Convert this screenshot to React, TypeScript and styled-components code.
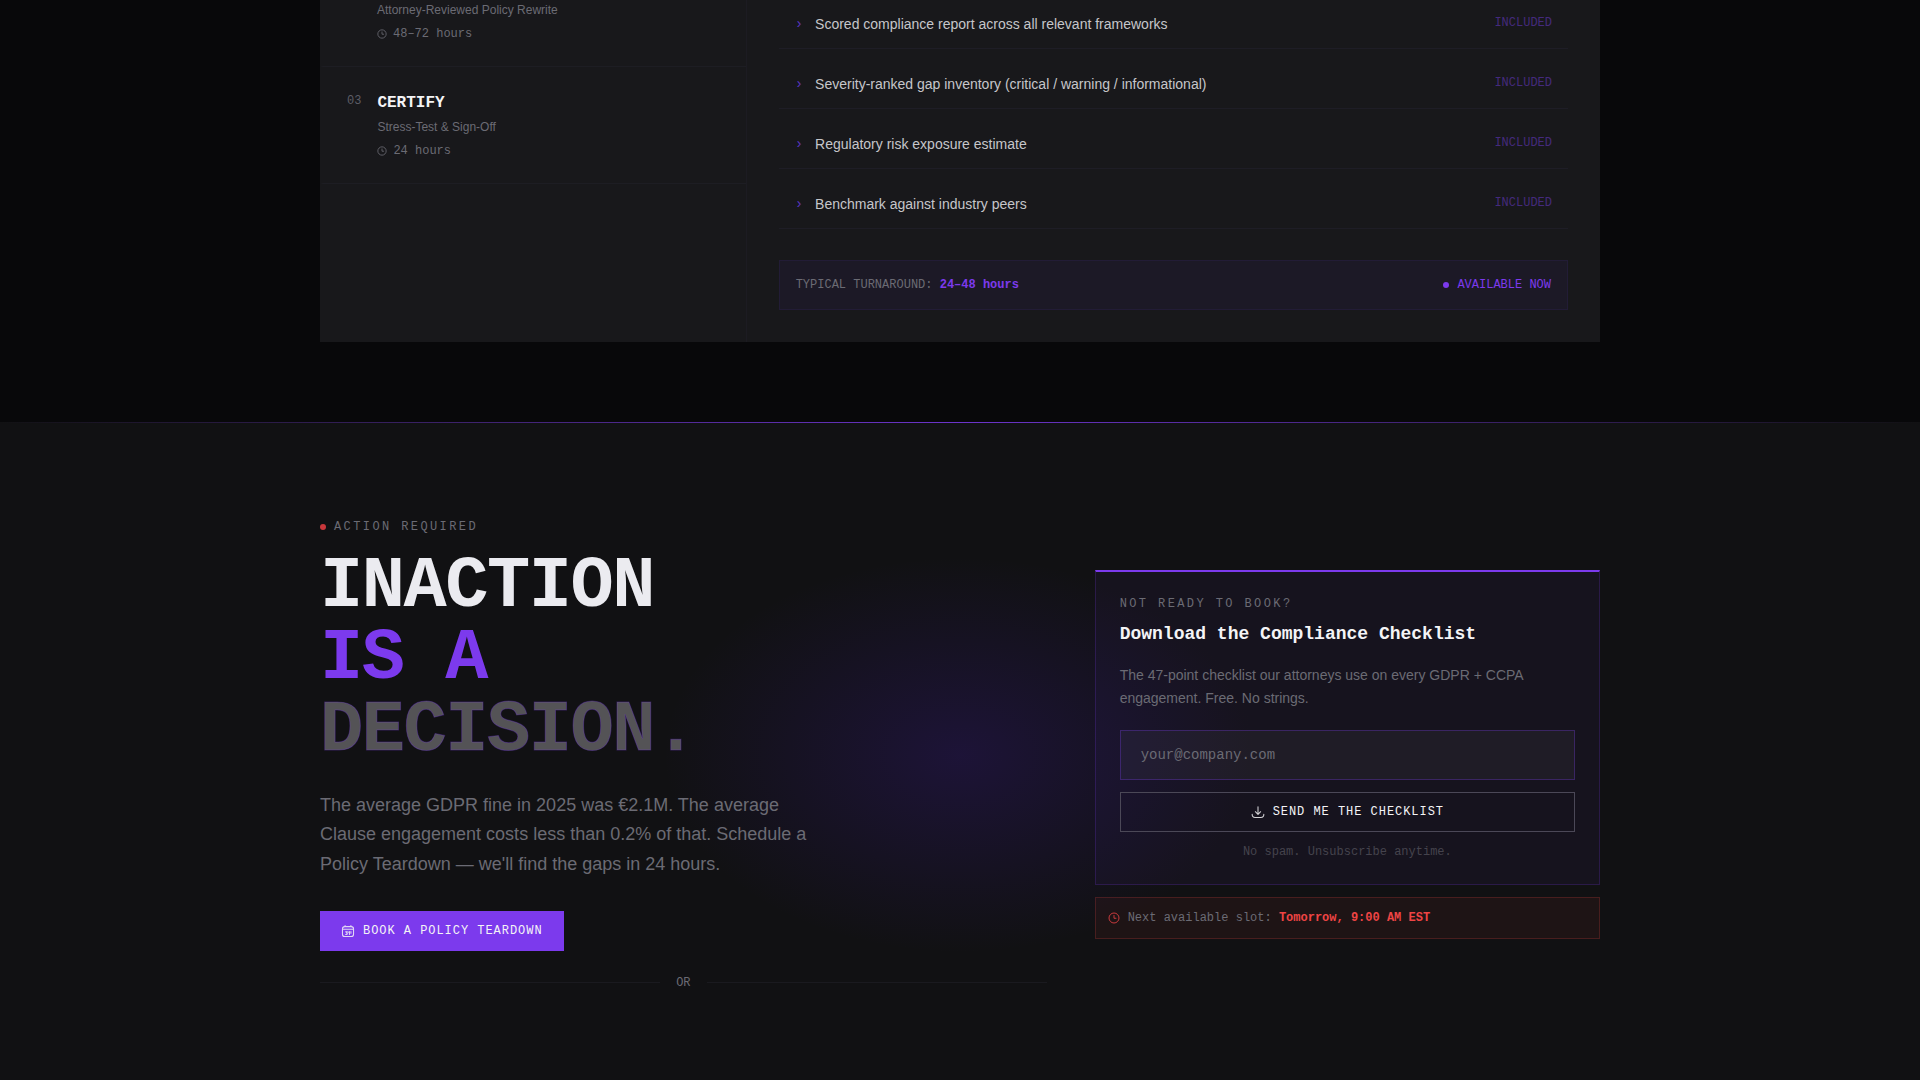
import React from "react";
import styled, { createGlobalStyle } from "styled-components";

const mono = `"Liberation Mono", "Courier New", monospace`;
const sans = `"Liberation Sans", Arial, sans-serif`;
const violet = "#7c3aed";
const muted = "#6b6b74";

const GlobalStyle = createGlobalStyle`
  *, *::before, *::after { box-sizing: border-box; }
  body { margin: 0; background: #08080a; color: #f4f4f6; font-family: ${sans}; }
  h2, h3, p, ul, ol { margin: 0; padding: 0; }
  ul, ol { list-style: none; }
`;

const Page = styled.main`
  min-height: 100vh;
  display: flex;
  flex-direction: column;
`;

const Container = styled.div`
  width: 100%;
  max-width: 1280px;
  margin: 0 auto;
`;

const Process = styled.section`
  padding-bottom: 80px;
`;

const Panel = styled(Container)`
  display: grid;
  grid-template-columns: 1fr 2fr;
  background: #18181b;
`;

const Steps = styled.ol`
  border-right: 1px solid #1c1b22;
`;

const Step = styled.li<{ $cut?: boolean }>`
  display: flex;
  gap: 16px;
  padding: ${(p) => (p.$cut ? "2px 24px 24px 54px" : "24px")};
  border-left: 3px solid transparent;
  border-bottom: 1px solid #1d1d23;
`;

const StepNumber = styled.span`
  padding-top: 2px;
  font: 12px/16px ${mono};
  color: #5d5d66;
`;

const StepTitle = styled.h3`
  margin-bottom: 4px;
  font: bold 16px/24px ${mono};
`;

const StepSubtitle = styled.p`
  margin-bottom: 8px;
  font: 12px/16px ${sans};
  color: ${muted};
`;

const Duration = styled.p`
  display: flex;
  align-items: center;
  gap: 6px;
  font: 12px/16px ${mono};
  color: ${muted};
`;

const Detail = styled.div`
  padding: 1px 32px 32px;
`;

const Deliverables = styled.ul`
  display: grid;
  gap: 12px;
  margin-bottom: 31px;
`;

const Deliverable = styled.li`
  display: flex;
  align-items: flex-start;
  gap: 12px;
  padding: 12px 16px;
  border-bottom: 1px solid #1e1d26;
  font: 14px/23px ${sans};
  color: #c6c6ca;
`;

const Chevron = styled.span`
  font-family: ${mono};
  color: #5b35c0;
`;

const Included = styled.span`
  margin-left: auto;
  font: 12px/20px ${mono};
  color: #442a7c;
`;

const Turnaround = styled.div`
  display: flex;
  justify-content: space-between;
  align-items: center;
  padding: 16px;
  border: 1px solid #221c36;
  background: #1c1926;
  font: 12px/16px ${mono};
  color: ${muted};

  strong { color: ${violet}; }
`;

const Status = styled.span`
  display: flex;
  align-items: center;
  gap: 8px;
  color: ${violet};
`;

const Dot = styled.i<{ $color: string }>`
  width: 6px;
  height: 6px;
  border-radius: 50%;
  background: ${(p) => p.$color};
`;

const Cta = styled.section`
  position: relative;
  flex: 1;
  padding: 97px 0 80px;
  background: #111113;
`;

const TopRule = styled.div`
  position: absolute;
  inset: 0 0 auto;
  height: 1px;
  background: linear-gradient(90deg, transparent, ${violet}, transparent);
  opacity: 0.85;
`;

const CtaGrid = styled(Container)`
  position: relative;
  display: grid;
  grid-template-columns: repeat(12, 1fr);
  column-gap: 48px;
  align-items: center;
`;

const Glow = styled.div`
  position: absolute;
  top: 50%;
  left: 50%;
  width: 600px;
  height: 400px;
  transform: translate(-50%, -50%);
  background: radial-gradient(ellipse, rgba(76, 29, 200, 0.2), transparent 70%);
  pointer-events: none;
`;

const Pitch = styled.div`
  position: relative;
  grid-column: span 7;
`;

const Offer = styled.aside`
  position: relative;
  grid-column: span 5;
  display: grid;
  gap: 12px;
`;

const Eyebrow = styled.p`
  display: flex;
  align-items: center;
  gap: 8px;
  font: 12px/16px ${mono};
  letter-spacing: 0.2em;
  color: ${muted};
`;

const Headline = styled.h2`
  margin: 16px 0 24px;
  font: bold 72px/72px ${mono};
  letter-spacing: -0.02em;
  color: #ebebf0;
`;

const HeadlineLine = styled.span<{ $tone?: "violet" | "ghost" }>`
  display: block;
  ${(p) => p.$tone === "violet" && `color: ${violet};`}
  ${(p) =>
    p.$tone === "ghost" &&
    `color: #545356; -webkit-text-stroke: 1px rgba(124, 58, 237, 0.3);`}
`;

const Lead = styled.p`
  max-width: 512px;
  margin-bottom: 32px;
  font-size: 18px;
  line-height: 1.625;
  color: ${muted};
`;

const Button = styled.button<{ $primary?: boolean }>`
  display: flex;
  align-items: center;
  justify-content: center;
  gap: 8px;
  height: 40px;
  padding: 0 20px;
  border: 1px solid ${(p) => (p.$primary ? violet : "#4b4857")};
  background: ${(p) => (p.$primary ? violet : "transparent")};
  color: #f4f4f6;
  font: 12px/16px ${mono};
  letter-spacing: 0.08em;
  cursor: pointer;

  svg { opacity: 0.85; }
`;

const Divider = styled.div`
  display: flex;
  align-items: center;
  gap: 16px;
  margin-top: 24px;
  font: 12px/16px ${mono};
  color: ${muted};

  &::before, &::after {
    content: "";
    flex: 1;
    height: 1px;
    background: #1a1a1f;
  }
`;

const Card = styled.form`
  display: grid;
  padding: 24px;
  border: 1px solid rgba(124, 58, 237, 0.2);
  border-top: 2px solid ${violet};
  background: rgba(124, 58, 237, 0.05);
`;

const CardTitle = styled.h3`
  margin: 8px 0 16px;
  font: bold 18px/28px ${mono};
`;

const CardText = styled.p`
  margin-bottom: 20px;
  font: 14px/23px ${sans};
  color: ${muted};
`;

const EmailInput = styled.input`
  width: 100%;
  height: 50px;
  margin-bottom: 12px;
  padding: 0 20px;
  border: 1px solid rgba(124, 58, 237, 0.3);
  border-radius: 0;
  background: rgba(255, 255, 255, 0.04);
  color: #f4f4f6;
  font: 14px ${mono};

  &::placeholder { color: ${muted}; opacity: 1; }
`;

const Note = styled.p`
  margin-top: 12px;
  font: 12px/16px ${mono};
  text-align: center;
  color: #45434d;
`;

const Slot = styled.p`
  display: flex;
  align-items: center;
  gap: 8px;
  padding: 12px;
  border: 1px solid rgba(239, 68, 68, 0.2);
  background: rgba(239, 68, 68, 0.06);
  font: 12px/16px ${mono};
  color: ${muted};

  svg { color: #c93a3d; }
  strong { color: #ef4444; }
`;

const ClockIcon = ({ size }: { size: number }) => (
  <svg width={size} height={size} viewBox="0 0 24 24" fill="none" stroke="currentColor" strokeWidth="2" aria-hidden="true">
    <circle cx="12" cy="12" r="10" />
    <path d="M12 7v5.5h4" strokeLinecap="round" strokeLinejoin="round" />
  </svg>
);

const CalendarIcon = () => (
  <svg width="14" height="14" viewBox="0 0 24 24" fill="none" stroke="currentColor" strokeWidth="1.8" strokeLinecap="round" strokeLinejoin="round" aria-hidden="true">
    <path d="M2.5 8.500c0-3 1-4 4-4h11c3 0 4 1 4 4v9c0 3-1 4-4 4h-11c-3 0-4-1-4-4z" />
    <path d="M7 4V2.500M17 4V2.500M3 9h18" />
    <path d="M8 13.500h3l-1.500 2c2 0 2 2.500-.5 2.500H8M13 14l1.500-1V18M17 13v3" />
  </svg>
);

const DownloadIcon = () => (
  <svg width="14" height="14" viewBox="0 0 24 24" fill="none" stroke="currentColor" strokeWidth="1.8" strokeLinecap="round" strokeLinejoin="round" aria-hidden="true">
    <path d="M2 16c0 4 1 5.500 5 5.500h10c4 0 5-1.500 5-5.500" />
    <path d="M12 3v13M7.500 11.500L12 16l4.500-4.500" />
  </svg>
);

const deliverables = [
  "Scored compliance report across all relevant frameworks",
  "Severity-ranked gap inventory (critical / warning / informational)",
  "Regulatory risk exposure estimate",
  "Benchmark against industry peers",
];

export default function App() {
  return (
    <Page>
      <GlobalStyle />
      <Process>
        <Panel>
          <Steps>
            <Step $cut>
              <div>
                <StepSubtitle>Attorney-Reviewed Policy Rewrite</StepSubtitle>
                <Duration><ClockIcon size={10} />48–72 hours</Duration>
              </div>
            </Step>
            <Step>
              <StepNumber>03</StepNumber>
              <div>
                <StepTitle>CERTIFY</StepTitle>
                <StepSubtitle>Stress-Test &amp; Sign-Off</StepSubtitle>
                <Duration><ClockIcon size={10} />24 hours</Duration>
              </div>
            </Step>
          </Steps>
          <Detail>
            <Deliverables>
              {deliverables.map((text) => (
                <Deliverable key={text}>
                  <Chevron>›</Chevron>
                  <span>{text}</span>
                  <Included>INCLUDED</Included>
                </Deliverable>
              ))}
            </Deliverables>
            <Turnaround>
              <span>TYPICAL TURNAROUND: <strong>24–48 hours</strong></span>
              <Status><Dot $color={violet} />AVAILABLE NOW</Status>
            </Turnaround>
          </Detail>
        </Panel>
      </Process>

      <Cta>
        <TopRule />
        <CtaGrid>
          <Glow />
          <Pitch>
            <Eyebrow><Dot $color="#c8373b" />ACTION REQUIRED</Eyebrow>
            <Headline>
              <HeadlineLine>INACTION</HeadlineLine>
              <HeadlineLine $tone="violet">IS A</HeadlineLine>
              <HeadlineLine $tone="ghost">DECISION.</HeadlineLine>
            </Headline>
            <Lead>
              The average GDPR fine in 2025 was €2.1M. The average Clause engagement costs less than
              0.2% of that. Schedule a Policy Teardown — we'll find the gaps in 24 hours.
            </Lead>
            <Button $primary type="button"><CalendarIcon />BOOK A POLICY TEARDOWN</Button>
            <Divider>OR</Divider>
          </Pitch>
          <Offer>
            <Card onSubmit={(e) => e.preventDefault()}>
              <Eyebrow>NOT READY TO BOOK?</Eyebrow>
              <CardTitle>Download the Compliance Checklist</CardTitle>
              <CardText>
                The 47-point checklist our attorneys use on every GDPR + CCPA engagement. Free. No strings.
              </CardText>
              <EmailInput type="email" aria-label="Email address" placeholder="your@company.com" />
              <Button type="submit"><DownloadIcon />SEND ME THE CHECKLIST</Button>
              <Note>No spam. Unsubscribe anytime.</Note>
            </Card>
            <Slot>
              <ClockIcon size={12} />
              <span>Next available slot: <strong>Tomorrow, 9:00 AM EST</strong></span>
            </Slot>
          </Offer>
        </CtaGrid>
      </Cta>
    </Page>
  );
}
